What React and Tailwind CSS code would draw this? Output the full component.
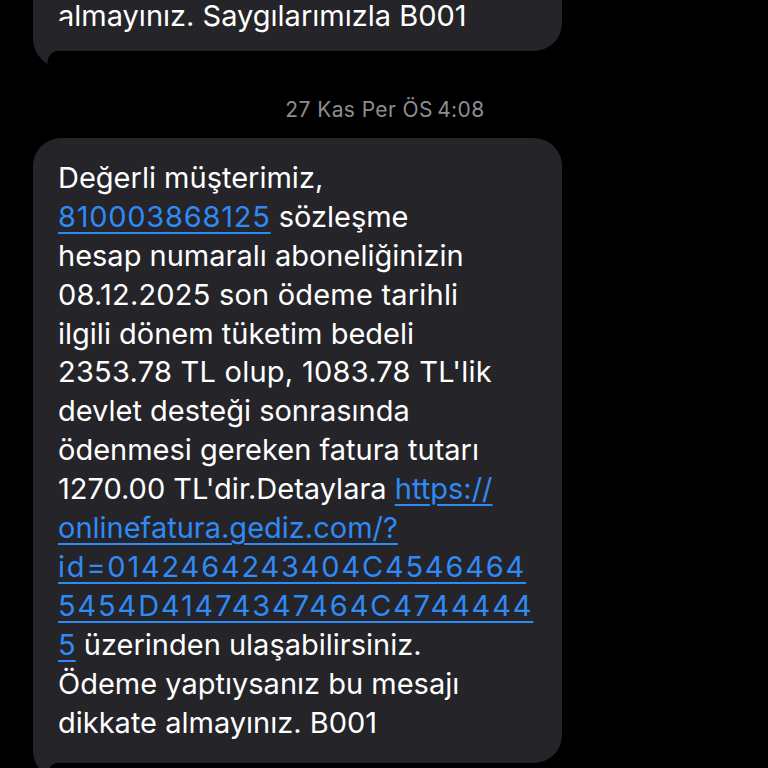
import React from "react";

const Tail = () => (
  <svg
    className="absolute left-0 bottom-[-13px]"
    width="36"
    height="43"
    viewBox="0 -30 36 43"
  >
    <path
      d="M0 -30 L0 -12 C0 -2 6 8 15 13 C13.5 8 16 3 23 0 L36 0 L36 -30 Z"
      fill="#252429"
    />
  </svg>
);

const L = ({ children, className = "" }) => (
  <span
    className={
      "text-[#2f8af5] underline decoration-[#2f8af5] decoration-2 underline-offset-[5px] " +
      className
    }
  >
    {children}
  </span>
);

export default function App() {
  const lines = [
    "Değerli müşterimiz,",
    <>
      <L className="tracking-[0.75px]">810003868125</L> sözleşme
    </>,
    "hesap numaralı aboneliğinizin",
    <span className="tracking-[0.2px]">08.12.2025 son ödeme tarihli</span>,
    "ilgili dönem tüketim bedeli",
    <span className="tracking-[0.25px]">2353.78 TL olup, 1083.78 TL'lik</span>,
    "devlet desteği sonrasında",
    "ödenmesi gereken fatura tutarı",
    <>
      1270.00 TL'dir.Detaylara <L>https://</L>
    </>,
    <L>onlinefatura.gediz.com/?</L>,
    <L className="tracking-[1.8px]">id=0142464243404C4546464</L>,
    <L className="tracking-[1.85px]">5454D41474347464C4744444</L>,
    <>
      <L>5</L> üzerinden ulaşabilirsiniz.
    </>,
    "Ödeme yaptıysanız bu mesajı",
    "dikkate almayınız. B001",
  ];
  return (
    <div
      className="h-[768px] w-[768px] overflow-hidden bg-black text-white"
      style={{ fontFamily: "Inter, 'Noto Sans', sans-serif" }}
    >
      <div className="flex flex-col">
        <div className="relative ml-[33px] mt-[-63px] w-[529px] rounded-[28px] bg-[#252429] pb-[15px] pl-[25px] pt-[60px] text-[29px] leading-[38.9px]">
          <div className="whitespace-nowrap">almayınız. Saygılarımızla B001</div>
          <Tail />
        </div>
        <div className="mt-[46px] w-full pl-[2px] text-center text-[21px] leading-[25px] tracking-[0.4px] text-[#8d8d91]">
          27 Kas Per ÖS{"\u202F"}4:08
        </div>
        <div className="relative ml-[33px] mt-[16px] w-[529px] rounded-[28px] bg-[#252429] pb-[20px] pl-[25px] pt-[21px] text-[29px] leading-[38.9px]">
          {lines.map((l, i) => (
            <div key={i} className="whitespace-nowrap">
              {l}
            </div>
          ))}
          <Tail />
        </div>
      </div>
    </div>
  );
}
